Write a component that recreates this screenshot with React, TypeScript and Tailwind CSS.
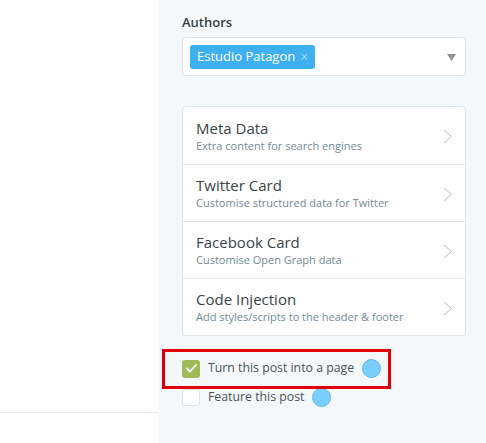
interface MetaItem {
  title: string;
  desc: string;
}

const items: MetaItem[] = [
  { title: 'Meta Data', desc: 'Extra content for search engines' },
  { title: 'Twitter Card', desc: 'Customise structured data for Twitter' },
  { title: 'Facebook Card', desc: 'Customise Open Graph data' },
  { title: 'Code Injection', desc: 'Add styles/scripts to the header & footer' },
];

function Hint() {
  return <span className="ml-[8px] inline-block h-[19px] w-[19px] rounded-full border border-[#5db7ec] bg-[#79cefb]" />;
}

export default function App() {
  return (
    <div className="flex h-[443px] w-[486px] overflow-hidden font-['Open_Sans',sans-serif]">
      <div className="flex w-[158px] flex-col bg-white">
        <div className="flex-1" />
        <div className="h-[31px] border-t border-[#e6ebee]" />
      </div>

      <aside className="flex-1 bg-[#f4f8fb] pl-[24px] pr-[20px] pt-[13px]">
        <label className="block text-[13px] font-semibold leading-[18px] text-[#343f44]">Authors</label>
        <div className="mt-[6px] flex h-[39px] items-center rounded-[4px] border border-[#dfe4e8] bg-white pl-[7px] pr-[9px]">
          <span className="flex h-[24px] items-center rounded-[3px] bg-[#3eb0ef] pl-[7px] pr-[7px] text-[13px] text-white">
            Estudio Patagon
            <span className="ml-[5px] text-[14px] font-light leading-none text-[#c9e8fa]">×</span>
          </span>
          <div className="flex-1" />
          <svg width="9" height="7" viewBox="0 0 9 7" className="mt-[1px]">
            <path d="M0 0h9L4.5 7z" fill="#8e9599" />
          </svg>
        </div>

        <div className="mt-[30px] overflow-hidden rounded-[4px] border border-[#dfe4e8] bg-white">
          {items.map((item, i) => (
            <div
              key={item.title}
              className={`flex h-[57px] items-center pl-[13px] pr-[12px] ${i > 0 ? 'border-t border-[#e3e7ea]' : ''}`}
            >
              <div className="flex-1">
                <p className="text-[15px] leading-[20px] text-[#3c4346]">{item.title}</p>
                <p className="text-[11px] leading-[16px] text-[#738a94]">{item.desc}</p>
              </div>
              <svg width="10" height="15" viewBox="0 0 10 15" className="mt-[2px]">
                <path d="M1 1l7.5 6.5L1 14" fill="none" stroke="#b3bcc0" strokeWidth="1" />
              </svg>
            </div>
          ))}
        </div>

        <div className="relative mt-[23px]">
          <div className="absolute left-[-20px] top-[-10px] h-[40px] w-[229px] border-[3px] border-[#e0000b]" />
          <div className="flex h-[19px] items-center">
            <span className="flex h-[18px] w-[18px] items-center justify-center rounded-[3px] bg-[#9fbb58]">
              <svg width="11" height="9" viewBox="0 0 11 9">
                <path d="M1 4.5l3 3L10 1" fill="none" stroke="white" strokeWidth="1.8" strokeLinecap="round" strokeLinejoin="round" />
              </svg>
            </span>
            <span className="ml-[8px] text-[12.3px] text-[#4a5255]">Turn this post into a page</span>
            <Hint />
          </div>
          <div className="mt-[10px] flex h-[19px] items-center">
            <span className="h-[17px] w-[18px] rounded-[3px] border border-[#dfe4e8] bg-white" />
            <span className="ml-[8px] text-[12.3px] text-[#4a5255]">Feature this post</span>
            <Hint />
          </div>
        </div>
      </aside>
    </div>
  );
}
